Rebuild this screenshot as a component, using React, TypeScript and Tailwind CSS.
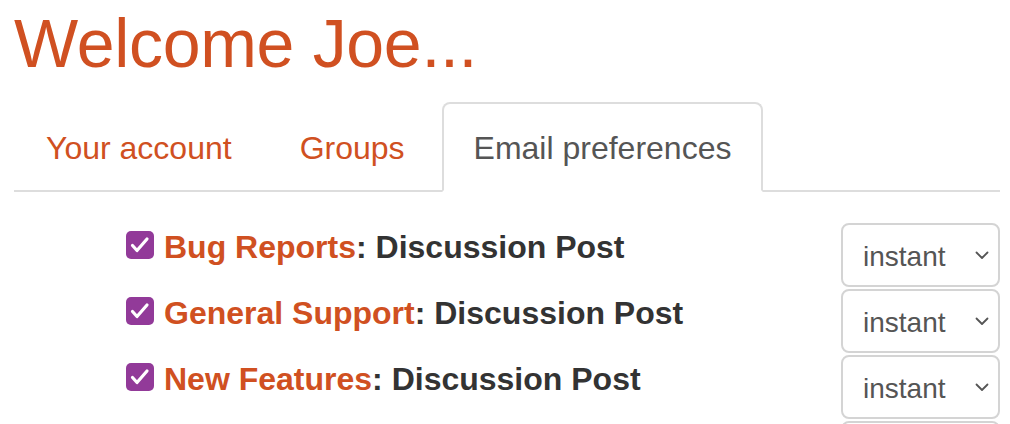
import React from "react";

const rows = [
  { name: "Bug Reports" },
  { name: "General Support" },
  { name: "New Features" },
];

function Check() {
  return (
    <span className="mt-[9px] mr-[10px] flex h-[28px] w-[28px] shrink-0 items-center justify-center rounded-[5px] bg-[#923a99]">
      <svg width="28" height="28" viewBox="0 0 28 28">
        <path d="M6.5 14.5 L11 19.5 L21 8" fill="none" stroke="#fff" strokeWidth="3.2" strokeLinecap="round" strokeLinejoin="round" />
      </svg>
    </span>
  );
}

function Select({ empty }: { empty?: boolean }) {
  return (
    <div className="my-px flex h-[64px] w-[159px] shrink-0 items-center justify-between rounded-[8px] border-2 border-[#d4d4d4] bg-white pl-[20px] pr-[9px] text-[28px] text-[#555]">
      {empty ? null : (
        <>
          <span className="pt-[4px] leading-none">instant</span>
          <svg width="14" height="9" viewBox="0 0 14 9" className="mt-[2px]">
            <path d="M1.5 1.5 L7 7 L12.5 1.5" fill="none" stroke="#555" strokeWidth="1.8" strokeLinecap="round" strokeLinejoin="round" />
          </svg>
        </>
      )}
    </div>
  );
}

export default function App() {
  return (
    <div
      className="h-[424px] w-[1010px] overflow-hidden bg-white pl-[14px] pr-[10px]"
      style={{ fontFamily: '"Liberation Sans", Arial, sans-serif' }}
    >
      <h1 className="pt-[6px] text-[68px] leading-[1.1] tracking-[-0.3px] text-[#d05021]">Welcome Joe...</h1>

      <div className="mt-[21px] flex border-b-2 border-[#ddd] text-[32px] leading-[1.42857]">
        <div className="-mb-[2px] mr-[4px] rounded-t-[8px] border-2 border-transparent px-[30px] pt-[22px] pb-[18px] text-[#d05021]">Your account</div>
        <div className="-mb-[2px] mr-[4px] rounded-t-[8px] border-2 border-transparent px-[30px] pt-[22px] pb-[18px] text-[#d05021]">Groups</div>
        <div className="-mb-[2px] ml-px rounded-t-[8px] border-2 border-[#ddd] border-b-white bg-white px-[30px] pt-[22px] pb-[18px] text-[#555]">Email preferences</div>
      </div>

      <div className="pt-[30px]">
        {rows.map((r) => (
          <div key={r.name} className="flex items-start">
            <div className="flex flex-1 items-start pl-[112px] text-[32px] font-bold leading-[1.42857] text-[#333]">
              <Check />
              <span className="mt-[3px]">
                <span className="text-[#d05021]">{r.name}</span>: Discussion Post
              </span>
            </div>
            <Select />
          </div>
        ))}
        <div className="flex justify-end">
          <Select empty />
        </div>
      </div>
    </div>
  );
}
